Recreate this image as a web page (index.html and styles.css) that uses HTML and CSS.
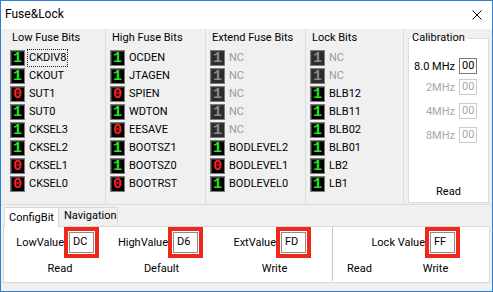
FILE: index.html
```html
<!DOCTYPE html>
<html lang="en">
<head>
  <meta charset="UTF-8">
  <title>Fuse&amp;Lock</title>
  <link rel="stylesheet" href="styles.css">
</head>
<body>
  <div class="window">
    <div class="titlebar">
      <span class="title">Fuse&amp;Lock</span>
      <svg class="close" width="10" height="10" viewBox="0 0 10 10">
        <path d="M0.5 0.5L9.5 9.5M9.5 0.5L0.5 9.5" stroke="#000" stroke-width="1" fill="none"/>
      </svg>
    </div>

    <div class="content">
      <div class="groups">
        <div class="group">
          <div class="group-title">Low Fuse Bits</div>
          <ul class="bits">
            <li><span class="bit on">1</span><span class="name focus">CKDIV8</span></li>
            <li><span class="bit on">1</span><span class="name">CKOUT</span></li>
            <li><span class="bit off">0</span><span class="name">SUT1</span></li>
            <li><span class="bit on">1</span><span class="name">SUT0</span></li>
            <li><span class="bit on">1</span><span class="name">CKSEL3</span></li>
            <li><span class="bit on">1</span><span class="name">CKSEL2</span></li>
            <li><span class="bit off">0</span><span class="name">CKSEL1</span></li>
            <li><span class="bit off">0</span><span class="name">CKSEL0</span></li>
          </ul>
        </div>

        <div class="group">
          <div class="group-title">High Fuse Bits</div>
          <ul class="bits">
            <li><span class="bit on">1</span><span class="name">OCDEN</span></li>
            <li><span class="bit on">1</span><span class="name">JTAGEN</span></li>
            <li><span class="bit off">0</span><span class="name">SPIEN</span></li>
            <li><span class="bit on">1</span><span class="name">WDTON</span></li>
            <li><span class="bit off">0</span><span class="name">EESAVE</span></li>
            <li><span class="bit on">1</span><span class="name">BOOTSZ1</span></li>
            <li><span class="bit on">1</span><span class="name">BOOTSZ0</span></li>
            <li><span class="bit off">0</span><span class="name">BOOTRST</span></li>
          </ul>
        </div>

        <div class="group">
          <div class="group-title">Extend Fuse Bits</div>
          <ul class="bits">
            <li class="disabled"><span class="bit">1</span><span class="name">NC</span></li>
            <li class="disabled"><span class="bit">1</span><span class="name">NC</span></li>
            <li class="disabled"><span class="bit">1</span><span class="name">NC</span></li>
            <li class="disabled"><span class="bit">1</span><span class="name">NC</span></li>
            <li class="disabled"><span class="bit">1</span><span class="name">NC</span></li>
            <li><span class="bit on">1</span><span class="name">BODLEVEL2</span></li>
            <li><span class="bit off">0</span><span class="name">BODLEVEL1</span></li>
            <li><span class="bit on">1</span><span class="name">BODLEVEL0</span></li>
          </ul>
        </div>

        <div class="group group-lock">
          <div class="group-title">Lock Bits</div>
          <ul class="bits">
            <li class="disabled"><span class="bit">1</span><span class="name">NC</span></li>
            <li class="disabled"><span class="bit">1</span><span class="name">NC</span></li>
            <li><span class="bit on">1</span><span class="name">BLB12</span></li>
            <li><span class="bit on">1</span><span class="name">BLB11</span></li>
            <li><span class="bit on">1</span><span class="name">BLB02</span></li>
            <li><span class="bit on">1</span><span class="name">BLB01</span></li>
            <li><span class="bit on">1</span><span class="name">LB2</span></li>
            <li><span class="bit on">1</span><span class="name">LB1</span></li>
          </ul>
        </div>

        <fieldset class="calib">
          <legend>Calibration</legend>
          <div class="cal-row main"><span>8.0 MHz</span><span class="field">00</span></div>
          <div class="cal-row disabled"><span>2MHz</span><span class="field">00</span></div>
          <div class="cal-row disabled"><span>4MHz</span><span class="field">00</span></div>
          <div class="cal-row disabled"><span>8MHz</span><span class="field">00</span></div>
          <div class="cal-read">Read</div>
        </fieldset>
      </div>

      <div class="tabs">
        <span class="tab active">ConfigBit</span>
        <span class="tab">Navigation</span>
      </div>

      <div class="panel">
        <div class="panel-left">
          <div class="value-row">
            <div class="value w-low"><span>LowValue</span><span class="hl"><span class="field">DC</span></span></div>
            <div class="value w-high"><span>HighValue</span><span class="hl"><span class="field">D6</span></span></div>
            <div class="value w-ext"><span>ExtValue</span><span class="hl"><span class="field">FD</span></span></div>
          </div>
          <div class="action-row">
            <span class="action a-low">Read</span>
            <span class="action a-high">Default</span>
            <span class="action a-ext">Write</span>
          </div>
        </div>
        <div class="vsep"></div>
        <div class="panel-right">
          <div class="value-row">
            <div class="value w-lock"><span>Lock Value</span><span class="hl"><span class="field">FF</span></span></div>
          </div>
          <div class="action-row">
            <span class="action a-read">Read</span>
            <span class="action a-write">Write</span>
          </div>
        </div>
      </div>
    </div>
  </div>
</body>
</html>
```

FILE: styles.css
```css
* {
  box-sizing: border-box;
}
body {
  margin: 0;
  font-family: Roboto, "Noto Sans", sans-serif;
  font-size: 11px;
  color: #000;
  background: #fff;
}
.window {
  width: 493px;
  height: 292px;
  border: 1px solid #2b7fd4;
  background: #f0f0f0;
  display: flex;
  flex-direction: column;
}
.titlebar {
  height: 28px;
  flex: none;
  background: #fff;
  display: flex;
  align-items: center;
  justify-content: space-between;
  padding: 0 10px 2px 4px;
}
.title {
  font-size: 12px;
}
.close {
  display: block;
  margin-top: 2px;
}

/* fuse bit groups */
.groups {
  height: 176px;
  flex: none;
  display: flex;
  padding-left: 5px;
  border-bottom: 1px solid #dcdcdc;
}
.group {
  width: 100px;
  padding: 1px 0 0 4px;
  border-right: 1px solid #dcdcdc;
}
.group-lock {
  width: 98px;
}
.group-title {
  line-height: 16px;
  padding-left: 2px;
}
.bits {
  list-style: none;
  margin: 3px 0 0;
  padding: 0;
}
.bits li {
  height: 18px;
  display: flex;
  align-items: center;
}
.bit {
  width: 15px;
  height: 16px;
  flex: none;
  display: flex;
  align-items: center;
  justify-content: center;
  background: #000;
  border: 1px solid #7c7c7c;
  box-shadow: inset 1px 1px 0 #3a3a3a;
  font-family: "Liberation Mono", monospace;
  font-weight: bold;
  font-size: 15px;
  line-height: 1;
  color: #8a8a8a;
}
.bit.on {
  color: #1fe61f;
}
.bit.off {
  color: #ff1f1f;
}
.disabled .bit {
  background: #2c2c2c;
}
.name {
  margin-left: 4px;
  line-height: 14px;
}
.disabled .name {
  color: #9a9a9a;
}
.focus {
  outline: 1px dotted #222;
  outline-offset: 1px;
}

/* calibration */
.calib {
  margin: 1px 0 0 4px;
  width: 81px;
  height: 173px;
  padding: 0 11px 2px 0;
  border: 1px solid #dcdcdc;
  background: #fff;
  display: flex;
  flex-direction: column;
}
.calib legend {
  margin-left: 1px;
  padding: 0 2px;
  line-height: 16px;
}
.cal-row {
  height: 18px;
  display: flex;
  align-items: center;
  justify-content: flex-end;
  gap: 4px;
  margin-top: 6px;
}
.cal-row.main {
  margin-top: 11px;
  margin-bottom: -3px;
}
.cal-row.disabled {
  color: #a8a8a8;
}
.field {
  display: block;
  width: 18px;
  height: 16px;
  border: 1px solid #7a7a7a;
  background: #fff;
  padding-left: 2px;
  line-height: 14px;
}
.cal-row.disabled .field {
  border-color: #cccccc;
}
.cal-read {
  margin-top: auto;
  text-align: center;
  padding-left: 11px;
  line-height: 16px;
}

/* tabs */
.tabs {
  height: 21px;
  flex: none;
  display: flex;
  align-items: flex-end;
  padding-left: 3px;
}
.tab {
  height: 19px;
  line-height: 16px;
  padding: 0 5px;
  border: 1px solid #d9d9d9;
  border-bottom: none;
}
.tab.active {
  width: 55px;
  height: 20px;
  margin-bottom: -1px;
  padding: 2px 0 0 4px;
  background: #fff;
  position: relative;
  z-index: 1;
}
.tab + .tab {
  width: 60px;
  margin-left: -1px;
}

/* tab panel */
.panel {
  height: 57px;
  flex: none;
  margin: 0 2px;
  border: 1px solid #d9d9d9;
  background: #fff;
  display: flex;
}
.panel-left {
  width: 328px;
}
.value-row {
  height: 31px;
  display: flex;
  align-items: center;
}
.value {
  display: flex;
  align-items: center;
  justify-content: flex-end;
}
.w-low { width: 95px; }
.w-high { width: 104px; }
.w-ext { width: 108px; }
.w-lock { width: 126px; }
.hl {
  display: block;
  border: 4px solid #f0281a;
  padding: 1px;
  background: #fff;
}
.hl .field {
  width: 25px;
  height: 21px;
  line-height: 18px;
  padding-left: 3px;
  border-color: #8c8c8c;
}
.action-row {
  height: 20px;
  display: flex;
  align-items: center;
}
.action {
  text-align: center;
}
.a-low { width: 112px; }
.a-high { width: 91px; }
.a-ext { width: 125px; padding-left: 10px; }
.a-read { width: 51px; }
.a-write { width: 101px; }
.vsep {
  width: 2px;
  height: 54px;
  border-left: 1px solid #c8c8c8;
  border-right: 1px solid #fff;
}
.panel-right {
  flex: 1;
}
```
